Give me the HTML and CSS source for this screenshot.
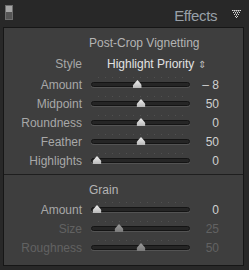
FILE: index.html
```html
<!DOCTYPE html>
<html lang="en">
<head>
    <meta charset="UTF-8">
    <title>Effects</title>
    <link rel="stylesheet" href="styles.css">
</head>
<body>
    <!-- Panel header -->
    <div class="panel-header">
        <span class="solo-toggle"></span>
        <span class="panel-title">Effects</span>
        <svg class="collapse" width="9" height="8" viewBox="0 0 9 8">
            <g fill="#d8d8d8">
                <rect x="0" y="0" width="1" height="1"/><rect x="2" y="0" width="1" height="1"/><rect x="4" y="0" width="1" height="1"/><rect x="6" y="0" width="1" height="1"/><rect x="8" y="0" width="1" height="1"/>
                <rect x="1" y="2" width="1" height="1"/><rect x="3" y="2" width="1" height="1"/><rect x="5" y="2" width="1" height="1"/><rect x="7" y="2" width="1" height="1"/>
                <rect x="2" y="4" width="1" height="1"/><rect x="4" y="4" width="1" height="1"/><rect x="6" y="4" width="1" height="1"/>
                <rect x="3" y="6" width="1" height="1"/><rect x="5" y="6" width="1" height="1"/>
                <rect x="4" y="7" width="1" height="1"/>
            </g>
            <g fill="#8a8a8a">
                <rect x="1" y="0" width="1" height="1"/><rect x="3" y="0" width="1" height="1"/><rect x="5" y="0" width="1" height="1"/><rect x="7" y="0" width="1" height="1"/>
                <rect x="2" y="1" width="1" height="1"/><rect x="4" y="1" width="1" height="1"/><rect x="6" y="1" width="1" height="1"/>
                <rect x="3" y="3" width="1" height="1"/><rect x="5" y="3" width="1" height="1"/>
                <rect x="4" y="5" width="1" height="1"/>
            </g>
        </svg>
    </div>

    <!-- Panel body -->
    <div class="panel">
        <div class="section">
            <div class="section-title">Post-Crop Vignetting</div>
            <div class="row style-row">
                <span class="label">Style</span>
                <span class="popup">Highlight Priority <span class="updown">&#8661;</span></span>
            </div>
            <div class="row">
                <span class="label">Amount</span>
                <div class="track"><span class="thumb" style="--v:0.46"></span></div>
                <span class="value">&ndash; 8</span>
            </div>
            <div class="row">
                <span class="label">Midpoint</span>
                <div class="track"><span class="thumb" style="--v:0.5"></span></div>
                <span class="value">50</span>
            </div>
            <div class="row">
                <span class="label">Roundness</span>
                <div class="track"><span class="thumb" style="--v:0.5"></span></div>
                <span class="value">0</span>
            </div>
            <div class="row">
                <span class="label">Feather</span>
                <div class="track"><span class="thumb" style="--v:0.5"></span></div>
                <span class="value">50</span>
            </div>
            <div class="row">
                <span class="label">Highlights</span>
                <div class="track"><span class="thumb" style="--v:0"></span></div>
                <span class="value">0</span>
            </div>
        </div>

        <div class="section grain">
            <div class="section-title">Grain</div>
            <div class="row">
                <span class="label">Amount</span>
                <div class="track"><span class="thumb" style="--v:0"></span></div>
                <span class="value">0</span>
            </div>
            <div class="row disabled">
                <span class="label">Size</span>
                <div class="track"><span class="thumb" style="--v:0.25"></span></div>
                <span class="value">25</span>
            </div>
            <div class="row disabled">
                <span class="label">Roughness</span>
                <div class="track"><span class="thumb" style="--v:0.5"></span></div>
                <span class="value">50</span>
            </div>
        </div>
    </div>
</body>
</html>
```

FILE: styles.css
```css
* {
    margin: 0;
    padding: 0;
    box-sizing: border-box;
}

body {
    width: 249px;
    height: 270px;
    background-color: #282828;
    font-family: "Liberation Sans", Arial, sans-serif;
    font-size: 12px;
    color: #a8a8a8;
    overflow: hidden;
}

/* Header */
.panel-header {
    height: 27px;
    display: flex;
    align-items: center;
    padding: 0 8px 0 5px;
}

.solo-toggle {
    width: 8px;
    height: 15px;
    margin-top: -2px;
    border: 1px solid #6e6e6e;
    background: linear-gradient(#a6a6a6 0, #a6a6a6 6px, #555 6px, #555 100%);
}

.panel-title {
    margin-left: auto;
    margin-right: 15px;
    font-size: 15px;
    letter-spacing: -0.4px;
    color: #98a0a8;
    margin-top: 3px;
}

.collapse {
    display: block;
    margin-top: 1px;
}

/* Panel body */
.panel {
    margin-left: 3px;
    width: 241px;
    height: 239px;
    background-color: #3e3e3e;
    border: 1px solid #161616;
}

.section {
    padding: 5px 0 4px;
}

.grain {
    border-top: 1px solid #1e1e1e;
    padding-top: 5px;
}

.section-title {
    height: 20px;
    line-height: 20px;
    padding-left: 85px;
    color: #b4b4b4;
}

.row {
    display: grid;
    grid-template-columns: 78px 99px 38px;
    align-items: center;
    height: 19px;
}

.style-row {
    height: 22px;
    display: flex;
}

.label {
    text-align: right;
}

.style-row .label {
    width: 78px;
}

.popup {
    margin-left: 25px;
    color: #e2e2e2;
}

.updown {
    font-size: 10px;
    color: #b8b8b8;
}

.track {
    position: relative;
    margin-left: 9px;
    width: 99px;
    height: 5px;
    border-radius: 3px;
    background-color: #252525;
    border: 1px solid #141414;
    box-shadow: 0 1px 0 #535353;
}

/* tick marks above the groove */
.track::before {
    content: "";
    position: absolute;
    left: 6px;
    right: 6px;
    top: -6px;
    height: 1px;
    background: repeating-linear-gradient(90deg, #505050 0, #505050 1px, transparent 1px, transparent 7px);
}

.thumb {
    position: absolute;
    left: calc(5px + var(--v) * 88px);
    bottom: -2px;
    width: 9px;
    height: 8px;
    transform: translateX(-50%);
    background: linear-gradient(#f0f0f0, #b8b8b8);
    clip-path: polygon(50% 0, 75% 30%, 100% 65%, 100% 100%, 0 100%, 0 65%, 25% 30%);
}

.value {
    text-align: right;
    color: #d0d0d0;
}

.disabled .label,
.disabled .value {
    color: #626262;
}

.disabled .thumb {
    background: linear-gradient(#9a9a9a, #7a7a7a);
}
```
